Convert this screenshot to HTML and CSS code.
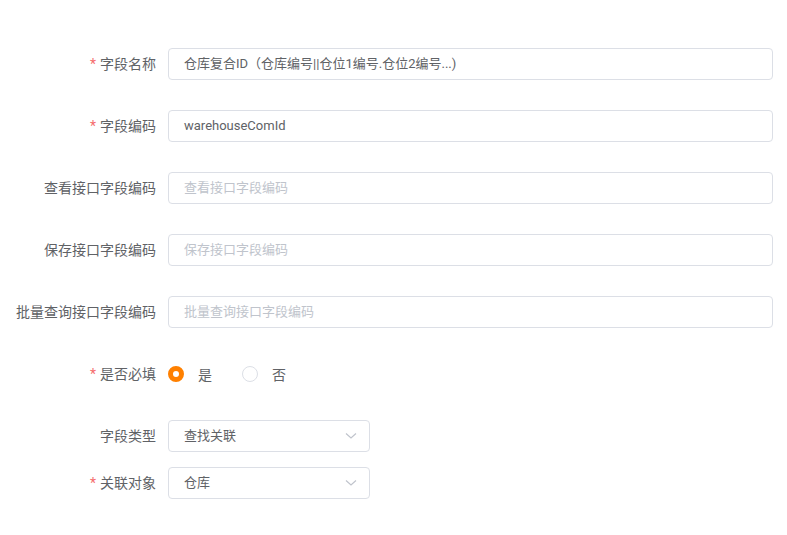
FILE: index.html
```html
<!DOCTYPE html>
<html>
<head>
<meta charset="utf-8">
<link rel="stylesheet" href="styles.css">
</head>
<body>
<form class="form">
  <div class="row">
    <label class="label"><span class="req">*</span>字段名称</label>
    <div class="control"><div class="input">仓库复合ID（仓库编号||仓位1编号.仓位2编号...)</div></div>
  </div>
  <div class="row">
    <label class="label"><span class="req">*</span>字段编码</label>
    <div class="control"><div class="input">warehouseComId</div></div>
  </div>
  <div class="row">
    <label class="label">查看接口字段编码</label>
    <div class="control"><div class="input ph">查看接口字段编码</div></div>
  </div>
  <div class="row">
    <label class="label">保存接口字段编码</label>
    <div class="control"><div class="input ph">保存接口字段编码</div></div>
  </div>
  <div class="row">
    <label class="label">批量查询接口字段编码</label>
    <div class="control"><div class="input ph">批量查询接口字段编码</div></div>
  </div>
  <div class="row">
    <label class="label"><span class="req">*</span>是否必填</label>
    <div class="control radios">
      <span class="radio"><span class="dot on"></span><span class="rtext">是</span></span>
      <span class="radio"><span class="dot"></span><span class="rtext">否</span></span>
    </div>
  </div>
  <div class="row tight">
    <label class="label">字段类型</label>
    <div class="control"><div class="input select"><span>查找关联</span>
      <svg class="arrow" width="12" height="8" viewBox="0 0 12 8"><path d="M1 1.5 L6 6 L11 1.5" fill="none" stroke="#c0c4cc" stroke-width="1.2"/></svg></div></div>
  </div>
  <div class="row">
    <label class="label"><span class="req">*</span>关联对象</label>
    <div class="control"><div class="input select"><span>仓库</span>
      <svg class="arrow" width="12" height="8" viewBox="0 0 12 8"><path d="M1 1.5 L6 6 L11 1.5" fill="none" stroke="#c0c4cc" stroke-width="1.2"/></svg></div></div>
  </div>
</form>
</body>
</html>
```
FILE: styles.css
```css
html, body {
  margin: 0;
  padding: 0;
  background: #fff;
}
body {
  font-family: Roboto, "Noto Sans CJK SC", sans-serif;
  color: #606266;
}
.form {
  padding: 48px 14px 0 0;
  display: flex;
  flex-direction: column;
}
.row {
  display: flex;
  align-items: center;
  height: 32px;
  margin-bottom: 30px;
}
.row.tight {
  margin-bottom: 15px;
}
.label {
  width: 168px;
  padding-right: 12px;
  box-sizing: border-box;
  text-align: right;
  font-size: 14px;
  line-height: 30px;
  color: #606266;
  flex-shrink: 0;
  white-space: nowrap;
}
.req {
  color: #f56c6c;
  margin-right: 4px;
}
.control {
  flex: 1;
  display: flex;
  align-items: center;
  height: 32px;
}
.input {
  width: 100%;
  height: 32px;
  box-sizing: border-box;
  border: 1px solid #dcdfe6;
  border-radius: 4px;
  padding: 0 15px;
  font-size: 13px;
  line-height: 30px;
  color: #606266;
  white-space: nowrap;
  overflow: hidden;
}
.input.ph {
  color: #c0c4cc;
}
.select {
  width: 202px;
  display: flex;
  align-items: center;
  justify-content: space-between;
  padding-right: 12px;
}
.arrow {
  display: block;
}
.radio {
  display: inline-flex;
  align-items: center;
  margin-right: 30px;
  font-size: 14px;
  color: #606266;
}
.dot {
  width: 16px;
  height: 16px;
  box-sizing: border-box;
  border: 1px solid #dcdfe6;
  border-radius: 50%;
  background: #fff;
  display: inline-block;
}
.dot.on {
  border: 5px solid #ff8000;
  background: #fff;
}
.rtext {
  margin-left: 14px;
}
```
